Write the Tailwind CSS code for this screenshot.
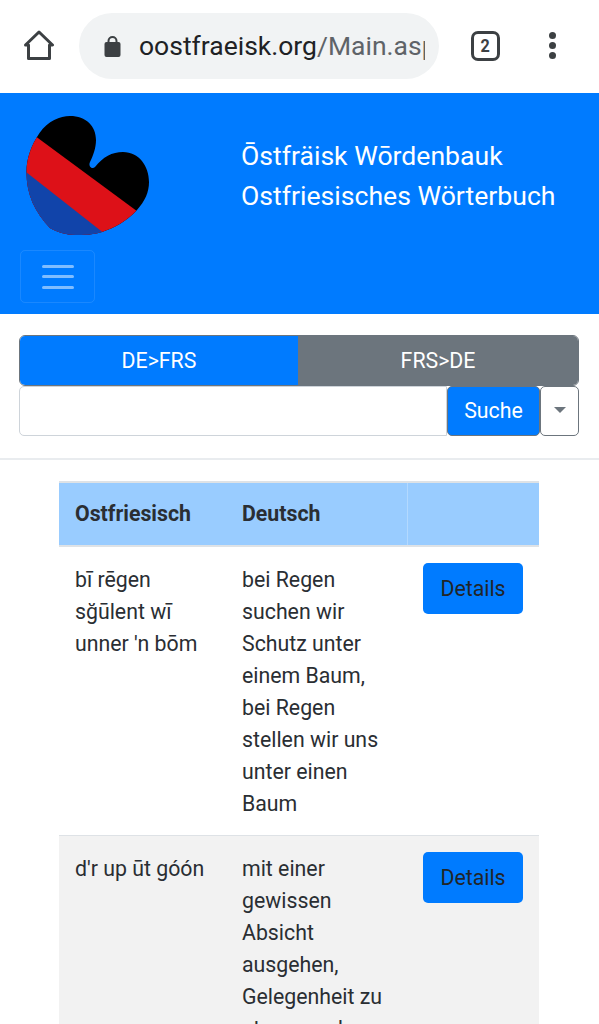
<!DOCTYPE html>
<html lang="de">
<head>
    <meta charset="UTF-8">
    <meta name="viewport" content="width=device-width, initial-scale=1.0">
    <title>Ostfriesisches Wörterbuch</title>
    <script src="https://cdn.jsdelivr.net/npm/@tailwindcss/browser@4"></script>
</head>
<body class="bg-white text-[#2a2e33] font-['Roboto',sans-serif] w-[599px] h-[1024px] overflow-hidden">
    <!-- browser bar -->
    <div class="h-[93px] flex items-start bg-white">
        <svg class="w-[32px] h-[32px] ml-[23px] mt-[30px] shrink-0" viewBox="0 0 32 32" fill="none" stroke="#3c4043" stroke-width="3" stroke-linejoin="round" stroke-linecap="round">
            <path d="M2.5 15 L16 2 L29.5 15 L26.5 15 L26.5 28.5 L5.5 28.5 L5.5 15 Z"/>
        </svg>
        <div class="ml-[24px] mt-[13px] w-[360px] h-[66px] rounded-[33px] bg-[#f1f3f4] flex items-center pl-[25px] shrink-0">
            <svg class="w-[17px] h-[23px] shrink-0" viewBox="0 0 17 23">
                <path d="M4.5 9 V6 a4 4 0 0 1 8 0 V9" fill="none" stroke="#3c4043" stroke-width="2"/>
                <rect x="0.5" y="7" width="16" height="15" rx="2" fill="#3c4043"/>
            </svg>
            <div class="ml-[18px] w-[286px] overflow-hidden whitespace-nowrap text-[26.5px] leading-[34px] text-[#5f6368]"><span class="text-[#202124]">oostfraeisk.org</span>/Main.asp</div>
        </div>
        <div class="ml-[32px] mt-[31px] w-[29px] h-[30px] border-[3px] border-[#3c4043] rounded-[7px] flex items-center justify-center shrink-0">
            <span class="text-[18px] leading-none font-bold text-[#3c4043] scale-x-90">2</span>
        </div>
        <div class="ml-[49px] mt-[32px] flex flex-col gap-[3.5px] shrink-0">
            <div class="w-[6.5px] h-[6.5px] rounded-full bg-[#3c4043]"></div>
            <div class="w-[6.5px] h-[6.5px] rounded-full bg-[#3c4043]"></div>
            <div class="w-[6.5px] h-[6.5px] rounded-full bg-[#3c4043]"></div>
        </div>
    </div>

    <!-- header -->
    <header class="h-[221px] bg-[#007bff] pt-[23px] pl-[20px]">
        <div class="flex h-[134px]">
            <svg class="w-[124px] h-[120px] ml-[6px] shrink-0" viewBox="26 116 124 120">
                <defs>
                    <clipPath id="herz">
                        <path d="M39.5 133 C48 121 60 116 70 116 C86 116 96 126 96 140 C96 148 93 156 90 162 C88 166 92 170 95 167 C103 157 112 152 123 152 C139 152 149 166 149 182 C149 192 145 201 137 210 C127 221 114 228 102 232 C92 235 82 235 76 235 C66 235 57 232 50 228 C35 212 26.500 195 26.500 172 C26.500 158 31 146 39.500 133 Z"/>
                    </clipPath>
                </defs>
                <g clip-path="url(#herz)">
                    <rect x="20" y="110" width="140" height="130" fill="#000"/>
                    <path d="M0 110 L160 228 L160 245 L0 245 Z" fill="#dd1118"/>
                    <path d="M0 151.500 L152 271 L0 271 Z" fill="#1144aa"/>
                </g>
            </svg>
            <div class="ml-[91px] pt-[20px] text-white text-[26.6px] leading-[40px] whitespace-nowrap">
                <div>Ōstfräisk Wōrdenbauk</div>
                <div>Ostfriesisches Wörterbuch</div>
            </div>
        </div>
        <button class="w-[75px] h-[53px] border border-white/10 rounded-[5px] flex flex-col items-center justify-center gap-[7.500px]">
            <span class="w-[32px] h-[3px] rounded-full bg-white/50"></span>
            <span class="w-[32px] h-[3px] rounded-full bg-white/50"></span>
            <span class="w-[32px] h-[3px] rounded-full bg-white/50"></span>
        </button>
    </header>

    <!-- search -->
    <section class="pl-[19px] pr-[20px] pt-[21px]">
        <div class="flex h-[51px] rounded-[6px] overflow-hidden border border-[#6c757d] text-white text-[21.3px]">
            <div class="w-[278px] bg-[#007bff] flex items-center justify-center">DE&gt;FRS</div>
            <div class="flex-1 bg-[#6c757d] flex items-center justify-center">FRS&gt;DE</div>
        </div>
        <div class="flex h-[50px]">
            <input type="text" class="w-[428px] h-[50px] border border-[#ced4da] rounded-l-[5px] bg-white">
            <button class="w-[93px] h-[50px] bg-[#007bff] border border-[#6c757d] rounded-[5px] text-white text-[21.3px]">Suche</button>
            <button class="w-[39px] h-[50px] bg-white border border-[#6c757d] rounded-[5px] flex items-center justify-center">
                <span class="w-0 h-0 mb-[2px] border-x-[6px] border-x-transparent border-t-[6px] border-t-[#6c757d]"></span>
            </button>
        </div>
    </section>
    <hr class="mt-[22px] border-t-2 border-[#e9ecef]">

    <!-- table -->
    <table class="ml-[59px] mt-[21px] w-[480px] table-fixed border-collapse text-[21.3px] leading-[32px]">
        <colgroup>
            <col class="w-[167px]">
            <col class="w-[181px]">
            <col class="w-[132px]">
        </colgroup>
        <thead>
            <tr class="h-[64px] bg-[#99ccff] border-y-2 border-[#dee2e6]">
                <th class="px-[16px] text-left font-bold">Ostfriesisch</th>
                <th class="px-[16px] text-left font-bold">Deutsch</th>
                <th class="border-l border-[#b3d9ff]"></th>
            </tr>
        </thead>
        <tbody>
            <tr class="border-b border-[#dee2e6] align-top">
                <td class="px-[16px] pt-[17px] pb-[15px]">bī rēgen sğūlent wī unner 'n bōm</td>
                <td class="px-[16px] pt-[17px] pb-[15px]">bei Regen suchen wir Schutz unter einem Baum, bei Regen stellen wir uns unter einen Baum</td>
                <td class="p-[16px]"><button class="w-[100px] h-[51px] bg-[#007bff] rounded-[5px] text-[#212529]">Details</button></td>
            </tr>
            <tr class="bg-[#f2f2f2] align-top">
                <td class="px-[16px] pt-[17px] pb-[15px]">d'r up ūt góón</td>
                <td class="px-[16px] pt-[17px] pb-[15px]">mit einer gewissen Absicht ausgehen, Gelegenheit zu etwas suchen</td>
                <td class="p-[16px]"><button class="w-[100px] h-[51px] bg-[#007bff] rounded-[5px] text-[#212529]">Details</button></td>
            </tr>
        </tbody>
    </table>
</body>
</html>
